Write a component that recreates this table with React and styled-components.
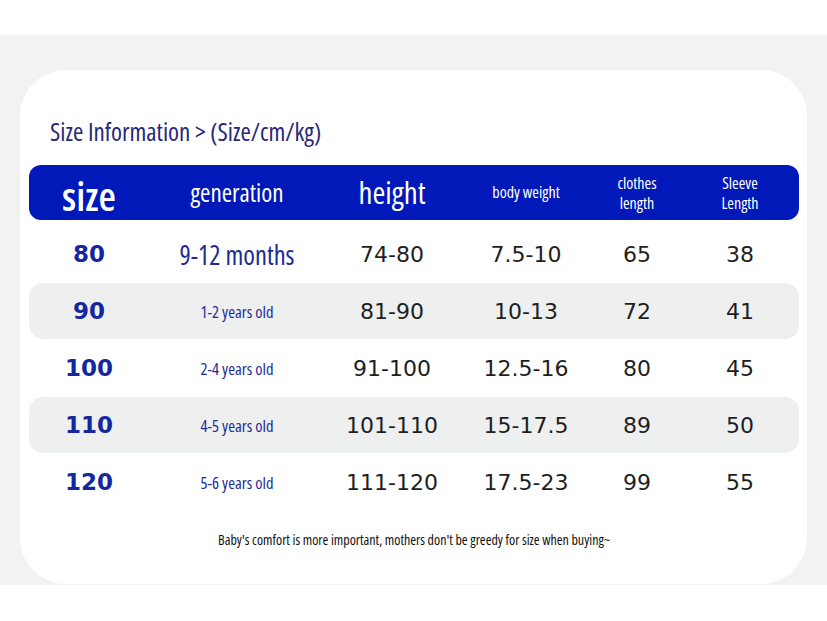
import React from "react";
import styled, { createGlobalStyle } from "styled-components";

const GlobalStyle = createGlobalStyle`
  body {
    margin: 0;
    background: #ffffff;
    font-family: "Open Sans", "DejaVu Sans Condensed", sans-serif;
  }
`;

const COLS = "120px 176px 134px 134px 88px 118px";
const NARROW = `"Open Sans", "DejaVu Sans Condensed", sans-serif`;

const Page = styled.div`
  width: 827px;
  height: 621px;
  padding-top: 35px;
  box-sizing: border-box;
  background: #ffffff;
`;

const Band = styled.div`
  height: 550px;
  background: #f2f2f2;
  overflow: hidden;
  padding: 35px 20px 0;
  box-sizing: border-box;
`;

const Card = styled.div`
  background: #ffffff;
  border-radius: 46px;
  height: 514px;
  padding: 47px 8px 0 9px;
  box-sizing: border-box;
`;

const Title = styled.h1`
  margin: 0 0 19px 21px;
  font-family: ${NARROW};
  font-stretch: 75%;
  font-weight: 500;
  font-size: 25px;
  line-height: 29px;
  color: #27287a;
`;

const HeaderBar = styled.div`
  display: grid;
  grid-template-columns: ${COLS};
  align-items: center;
  height: 55px;
  background: #0019b8;
  border-radius: 12px;
  color: #ffffff;
  margin-bottom: 6px;
`;

const HeadCell = styled.div`
  text-align: center;
  font-family: ${NARROW};
  font-stretch: 75%;
  font-weight: ${({ bold }) => (bold ? 600 : 500)};
  font-size: ${({ size }) => size}px;
  line-height: ${({ lh }) => lh || 1.1};
  padding-top: ${({ drop }) => drop || 0}px;
`;

const Row = styled.div`
  display: grid;
  grid-template-columns: ${COLS};
  align-items: center;
  height: 56px;
  margin-bottom: 1px;
  border-radius: 14px;
  background: ${({ shaded }) => (shaded ? "#eef0f0" : "transparent")};
`;

const SizeCell = styled.div`
  text-align: center;
  font-family: "DejaVu Sans", "Liberation Sans", sans-serif;
  font-weight: 700;
  font-size: 23px;
  color: #14279e;
`;

const GenCell = styled.div`
  text-align: center;
  font-family: ${NARROW};
  font-stretch: 75%;
  font-weight: 500;
  font-size: ${({ big }) => (big ? 26.5 : 16.5)}px;
  color: #1d2b96;
  padding-top: ${({ big }) => (big ? 2 : 0)}px;
`;

const NumCell = styled.div`
  text-align: center;
  font-family: "DejaVu Sans", "Liberation Sans", sans-serif;
  font-size: 22px;
  color: #1e1e1e;
`;

const Note = styled.p`
  margin: 20px 0 0;
  text-align: center;
  font-family: ${NARROW};
  font-stretch: 75%;
  font-weight: 500;
  font-size: 14px;
  color: #111111;
`;

const rows = [
  ["80", "9-12 months", "74-80", "7.5-10", "65", "38"],
  ["90", "1-2 years old", "81-90", "10-13", "72", "41"],
  ["100", "2-4 years old", "91-100", "12.5-16", "80", "45"],
  ["110", "4-5 years old", "101-110", "15-17.5", "89", "50"],
  ["120", "5-6 years old", "111-120", "17.5-23", "99", "55"],
];

export default function App() {
  return (
    <Page>
      <GlobalStyle />
      <Band>
        <Card>
          <Title>Size Information &gt; (Size/cm/kg)</Title>
          <HeaderBar>
            <HeadCell size={40} bold drop={7}>size</HeadCell>
            <HeadCell size={25}>generation</HeadCell>
            <HeadCell size={31}>height</HeadCell>
            <HeadCell size={16}>body weight</HeadCell>
            <HeadCell size={16} lh={1.25}>clothes<br />length</HeadCell>
            <HeadCell size={16} lh={1.25}>Sleeve<br />Length</HeadCell>
          </HeaderBar>
          {rows.map((r, i) => (
            <Row key={r[0]} shaded={i % 2 === 1}>
              <SizeCell>{r[0]}</SizeCell>
              <GenCell big={i === 0}>{r[1]}</GenCell>
              <NumCell>{r[2]}</NumCell>
              <NumCell>{r[3]}</NumCell>
              <NumCell>{r[4]}</NumCell>
              <NumCell>{r[5]}</NumCell>
            </Row>
          ))}
          <Note>Baby's comfort is more important, mothers don't be greedy for size when buying~</Note>
        </Card>
      </Band>
    </Page>
  );
}
